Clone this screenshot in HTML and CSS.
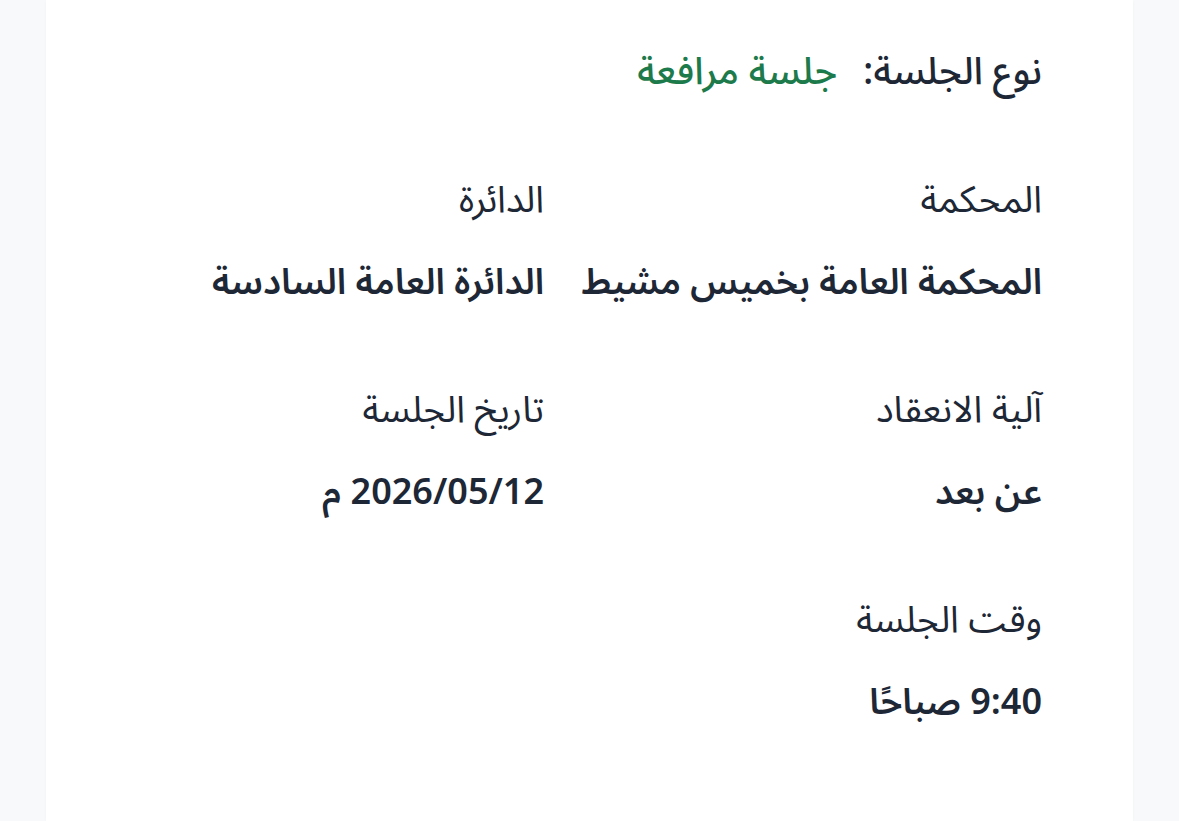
FILE: index.html
```html
<!DOCTYPE html>
<html lang="ar" dir="rtl">
<head>
<meta charset="utf-8">
<title>تفاصيل الجلسة</title>
<link rel="stylesheet" href="styles.css">
</head>
<body>
<main class="card">
  <div class="type-row">
    <span class="type-label">نوع الجلسة:</span>
    <span class="type-value">جلسة مرافعة</span>
  </div>
  <div class="fields">
    <div class="field">
      <div class="label">المحكمة</div>
      <div class="value">المحكمة العامة بخميس مشيط</div>
    </div>
    <div class="field">
      <div class="label">الدائرة</div>
      <div class="value">الدائرة العامة السادسة</div>
    </div>
    <div class="field">
      <div class="label">آلية الانعقاد</div>
      <div class="value">عن بعد</div>
    </div>
    <div class="field">
      <div class="label">تاريخ الجلسة</div>
      <div class="value">2026/05/12 م</div>
    </div>
    <div class="field">
      <div class="label">وقت الجلسة</div>
      <div class="value">9:40 صباحًا</div>
    </div>
  </div>
</main>
</body>
</html>
```

FILE: styles.css
```css
html, body {
  margin: 0;
  padding: 0;
  height: 100%;
}
body {
  background: #f8f9fb;
  font-family: "Noto Sans Arabic", "Noto Sans", "DejaVu Sans", sans-serif;
  color: #1d2735;
  display: flex;
  justify-content: center;
}
.card {
  background: #ffffff;
  width: 1087px;
  box-sizing: border-box;
  padding: 40px 91px 0 0;
  min-height: 821px;
  box-shadow: 0 0 3px rgba(0, 0, 0, 0.03);
}
.type-row {
  display: flex;
  align-items: center;
  gap: 26px;
  height: 64px;
  font-size: 38px;
}
.type-label {
  font-weight: 500;
  color: #1d2735;
}
.type-value {
  font-weight: 500;
  color: #1d7a4b;
}
.fields {
  margin-top: 64px;
  display: grid;
  grid-template-columns: minmax(0, 1fr) minmax(0, 1fr);
  row-gap: 63px;
}
.field {
  display: flex;
  flex-direction: column;
  gap: 19px;
  min-width: 0;
}
.label {
  font-size: 37px;
  line-height: 64px;
  color: #1d2735;
  font-weight: 400;
}
.value {
  font-size: 36px;
  line-height: 64px;
  font-weight: 600;
  color: #1d2735;
  white-space: nowrap;
}
```
